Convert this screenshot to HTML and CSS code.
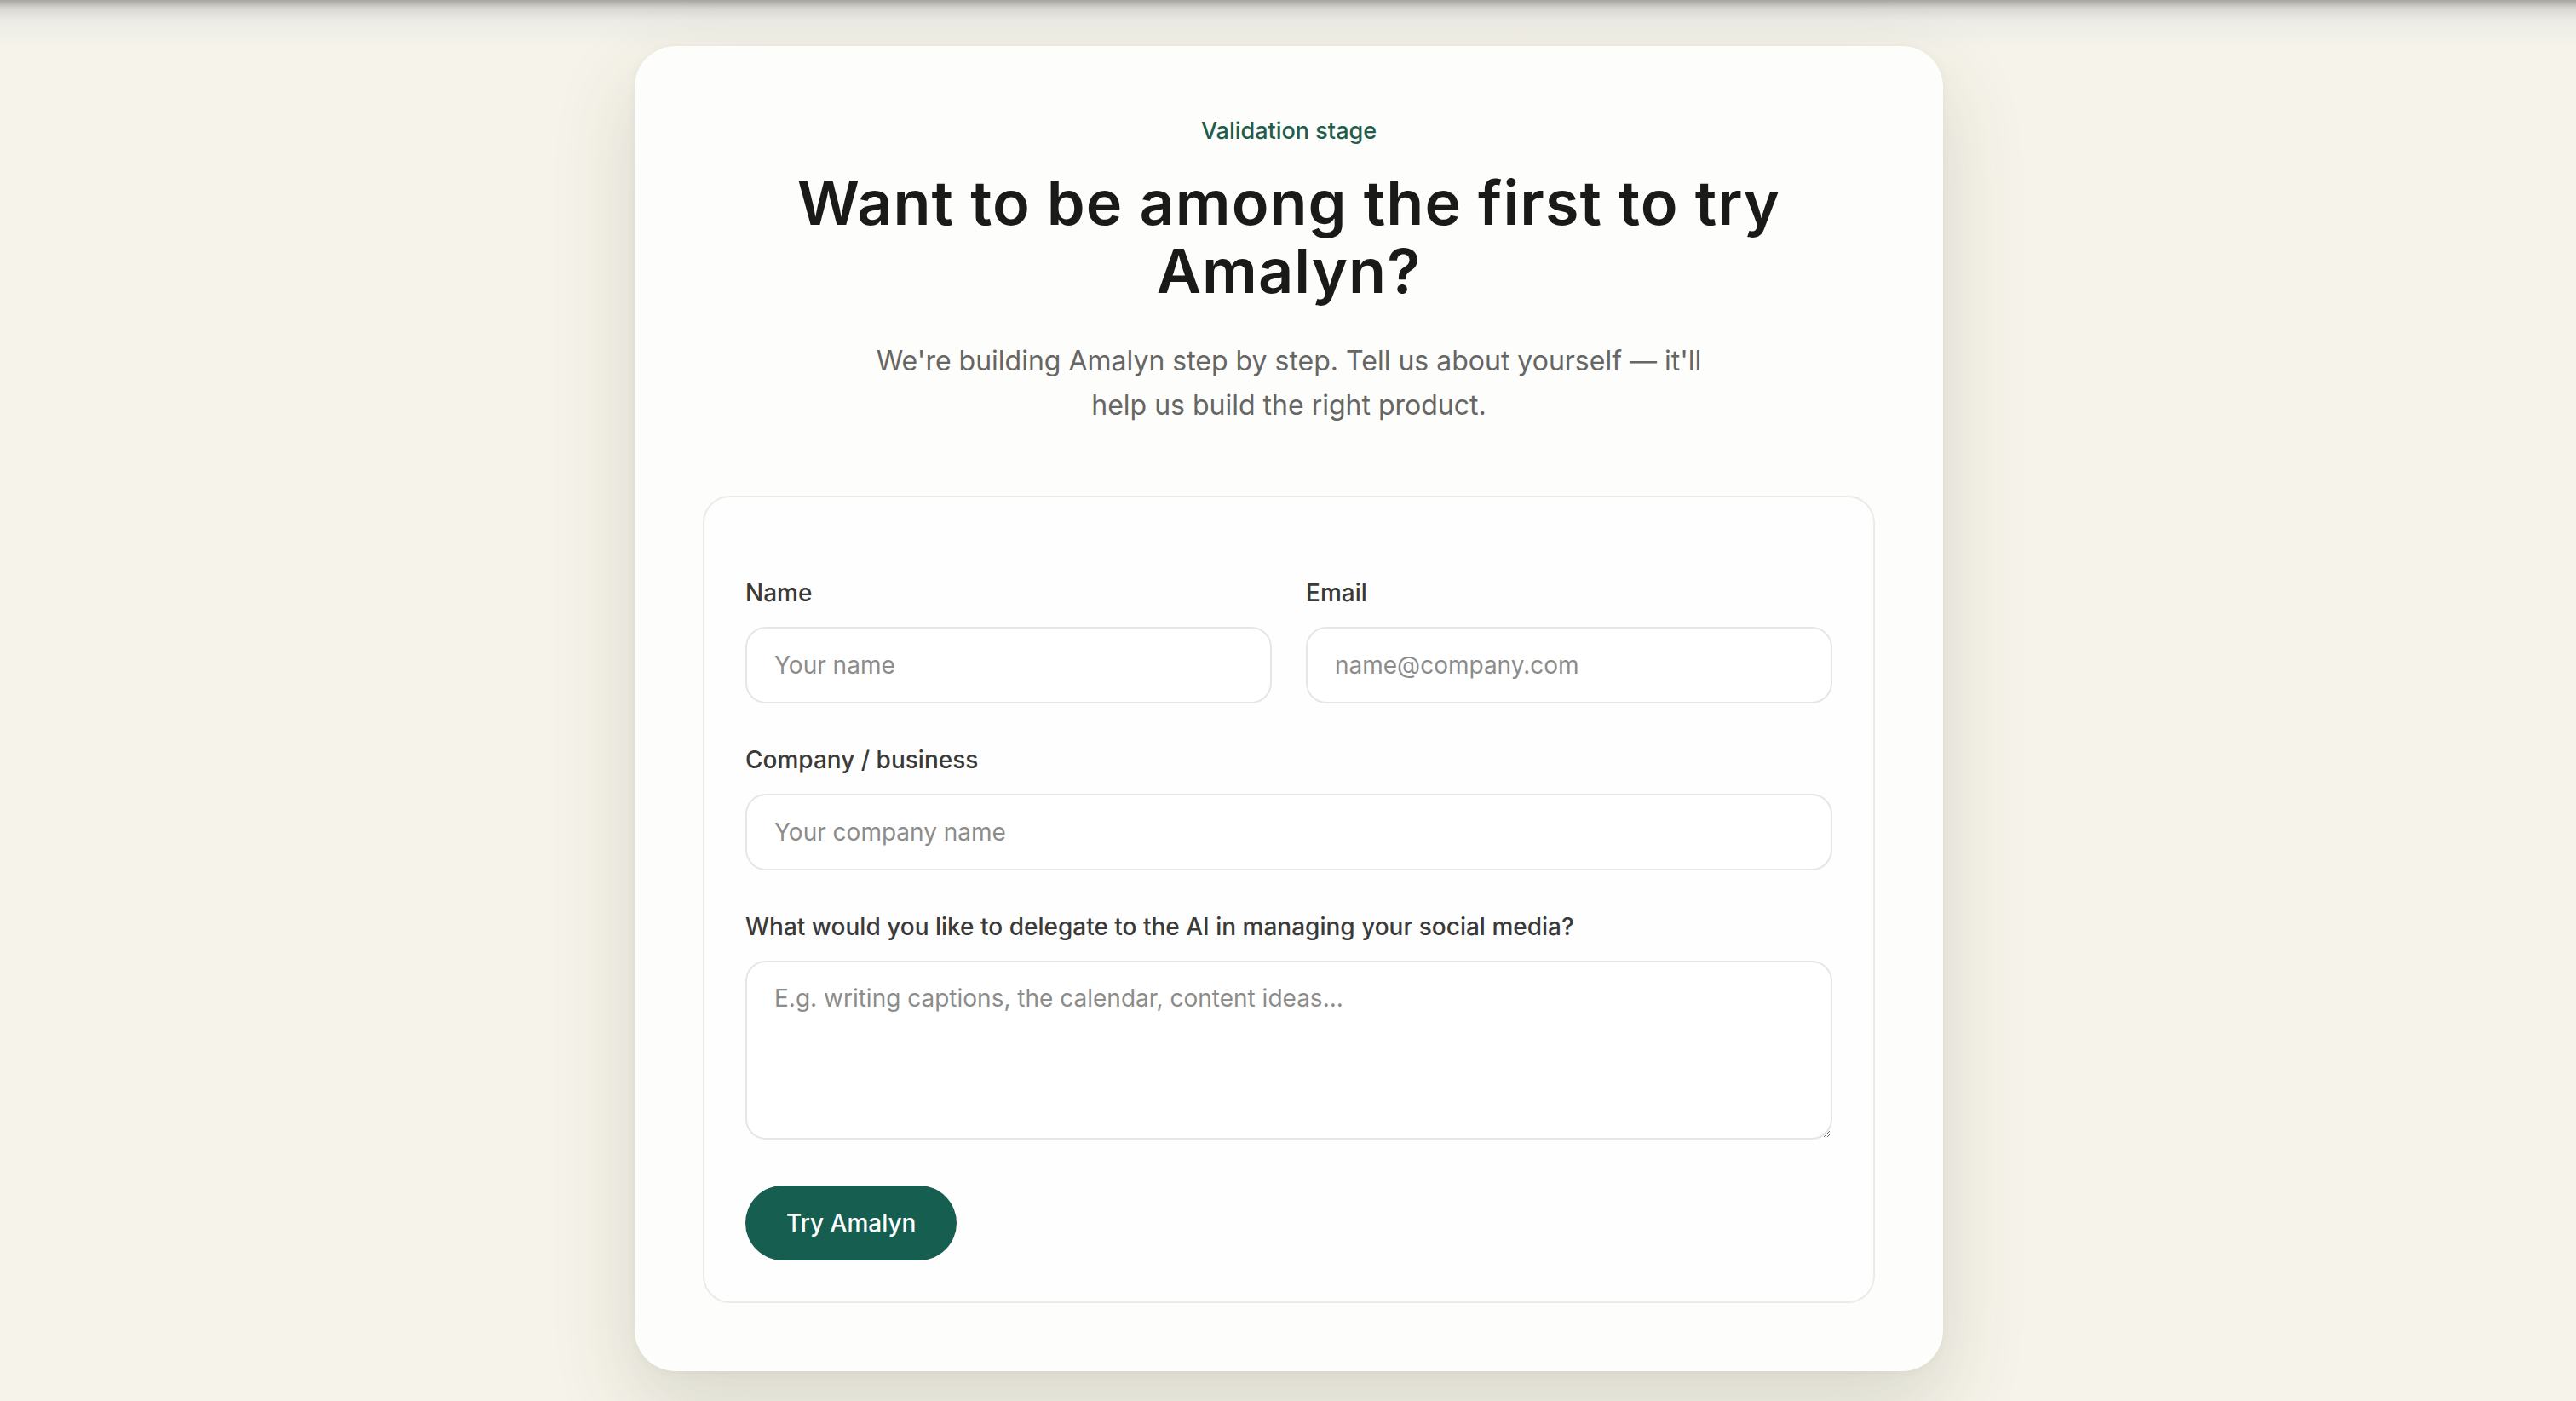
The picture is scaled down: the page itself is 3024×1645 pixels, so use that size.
FILE: index.html
```html
<!DOCTYPE html>
<html lang="en">
<head>
    <meta charset="UTF-8">
    <meta name="viewport" content="width=device-width, initial-scale=1.0">
    <title>Try Amalyn</title>
    <link rel="stylesheet" href="styles.css">
</head>
<body>
    <main class="page">
        <section class="card">
            <div class="intro">
                <p class="eyebrow">Validation stage</p>
                <h1>Want to be among the first to try Amalyn?</h1>
                <p class="lead">We're building Amalyn step by step. Tell us about yourself — it'll help us build the right product.</p>
            </div>

            <form class="signup" id="signupForm">
                <div class="row">
                    <div class="field">
                        <label for="name">Name</label>
                        <input type="text" id="name" placeholder="Your name">
                    </div>
                    <div class="field">
                        <label for="email">Email</label>
                        <input type="email" id="email" placeholder="name@company.com">
                    </div>
                </div>
                <div class="field">
                    <label for="company">Company / business</label>
                    <input type="text" id="company" placeholder="Your company name">
                </div>
                <div class="field">
                    <label for="delegate">What would you like to delegate to the AI in managing your social media?</label>
                    <textarea id="delegate" placeholder="E.g. writing captions, the calendar, content ideas..."></textarea>
                </div>
                <button type="button" class="btn">Try Amalyn</button>
            </form>
        </section>
    </main>
</body>
</html>
```

FILE: styles.css
```css
html {
    height: 100%;
    background: linear-gradient(to bottom, #a6a5a0 0, #d8d7d1 10px, #ecebe5 24px, rgba(246, 244, 234, 0) 60px), #f6f4ea;
}
body {
    margin: 0;
    height: 100%;
    overflow: hidden;
    font-family: Inter, "Noto Sans", sans-serif;
    color: #1b1b1a;
}
.page {
    display: flex;
    justify-content: center;
    padding-top: 54px;
}
.card {
    width: 1536px;
    box-sizing: border-box;
    margin-left: 2px;
    padding: 80px;
    background: #fdfdfb;
    border-radius: 48px;
    box-shadow: 0 40px 100px rgba(60, 60, 40, 0.16), 0 2px 12px rgba(60, 60, 40, 0.04);
}
.intro {
    text-align: center;
}
.eyebrow {
    margin: 0;
    font-size: 27px;
    line-height: 40px;
    font-weight: 500;
    color: #215c4d;
}
h1 {
    margin: 24px auto 0;
    max-width: 1240px;
    font-size: 72px;
    line-height: 80px;
    font-weight: 600;
    letter-spacing: 1px;
    color: #1a1a19;
}
.lead {
    margin: 40px auto 0;
    max-width: 1024px;
    font-size: 32px;
    line-height: 52px;
    color: #666664;
}
.signup {
    margin-top: 80px;
    padding: 92px 48px 48px;
    background: #fefefe;
    border: 2px solid #ecebe8;
    border-radius: 32px;
    display: flex;
    flex-direction: column;
    gap: 46px;
}
.row {
    display: grid;
    grid-template-columns: 1fr 1fr;
    gap: 40px;
}
.field {
    display: flex;
    flex-direction: column;
}
label {
    font-size: 28px;
    line-height: 40px;
    font-weight: 500;
    color: #3a3a39;
    margin-bottom: 20px;
}
input, textarea {
    font-family: Inter, "Noto Sans", sans-serif;
    font-size: 28px;
    line-height: 40px;
    color: #1b1b1a;
    background: #fff;
    border: 2px solid #e6e6e4;
    border-radius: 24px;
    padding: 0 32px;
    box-sizing: border-box;
    outline: none;
}
input {
    height: 90px;
}
textarea {
    display: block;
    height: 210px;
    padding: 22px 32px;
    resize: vertical;
}
input::placeholder, textarea::placeholder {
    color: #8c8c8a;
}
.btn {
    align-self: flex-start;
    margin-top: 8px;
    padding: 24px 48px;
    font-family: Inter, "Noto Sans", sans-serif;
    font-size: 28px;
    line-height: 40px;
    font-weight: 500;
    color: #fff;
    background: #165e50;
    border: none;
    border-radius: 999px;
    cursor: pointer;
}
```
